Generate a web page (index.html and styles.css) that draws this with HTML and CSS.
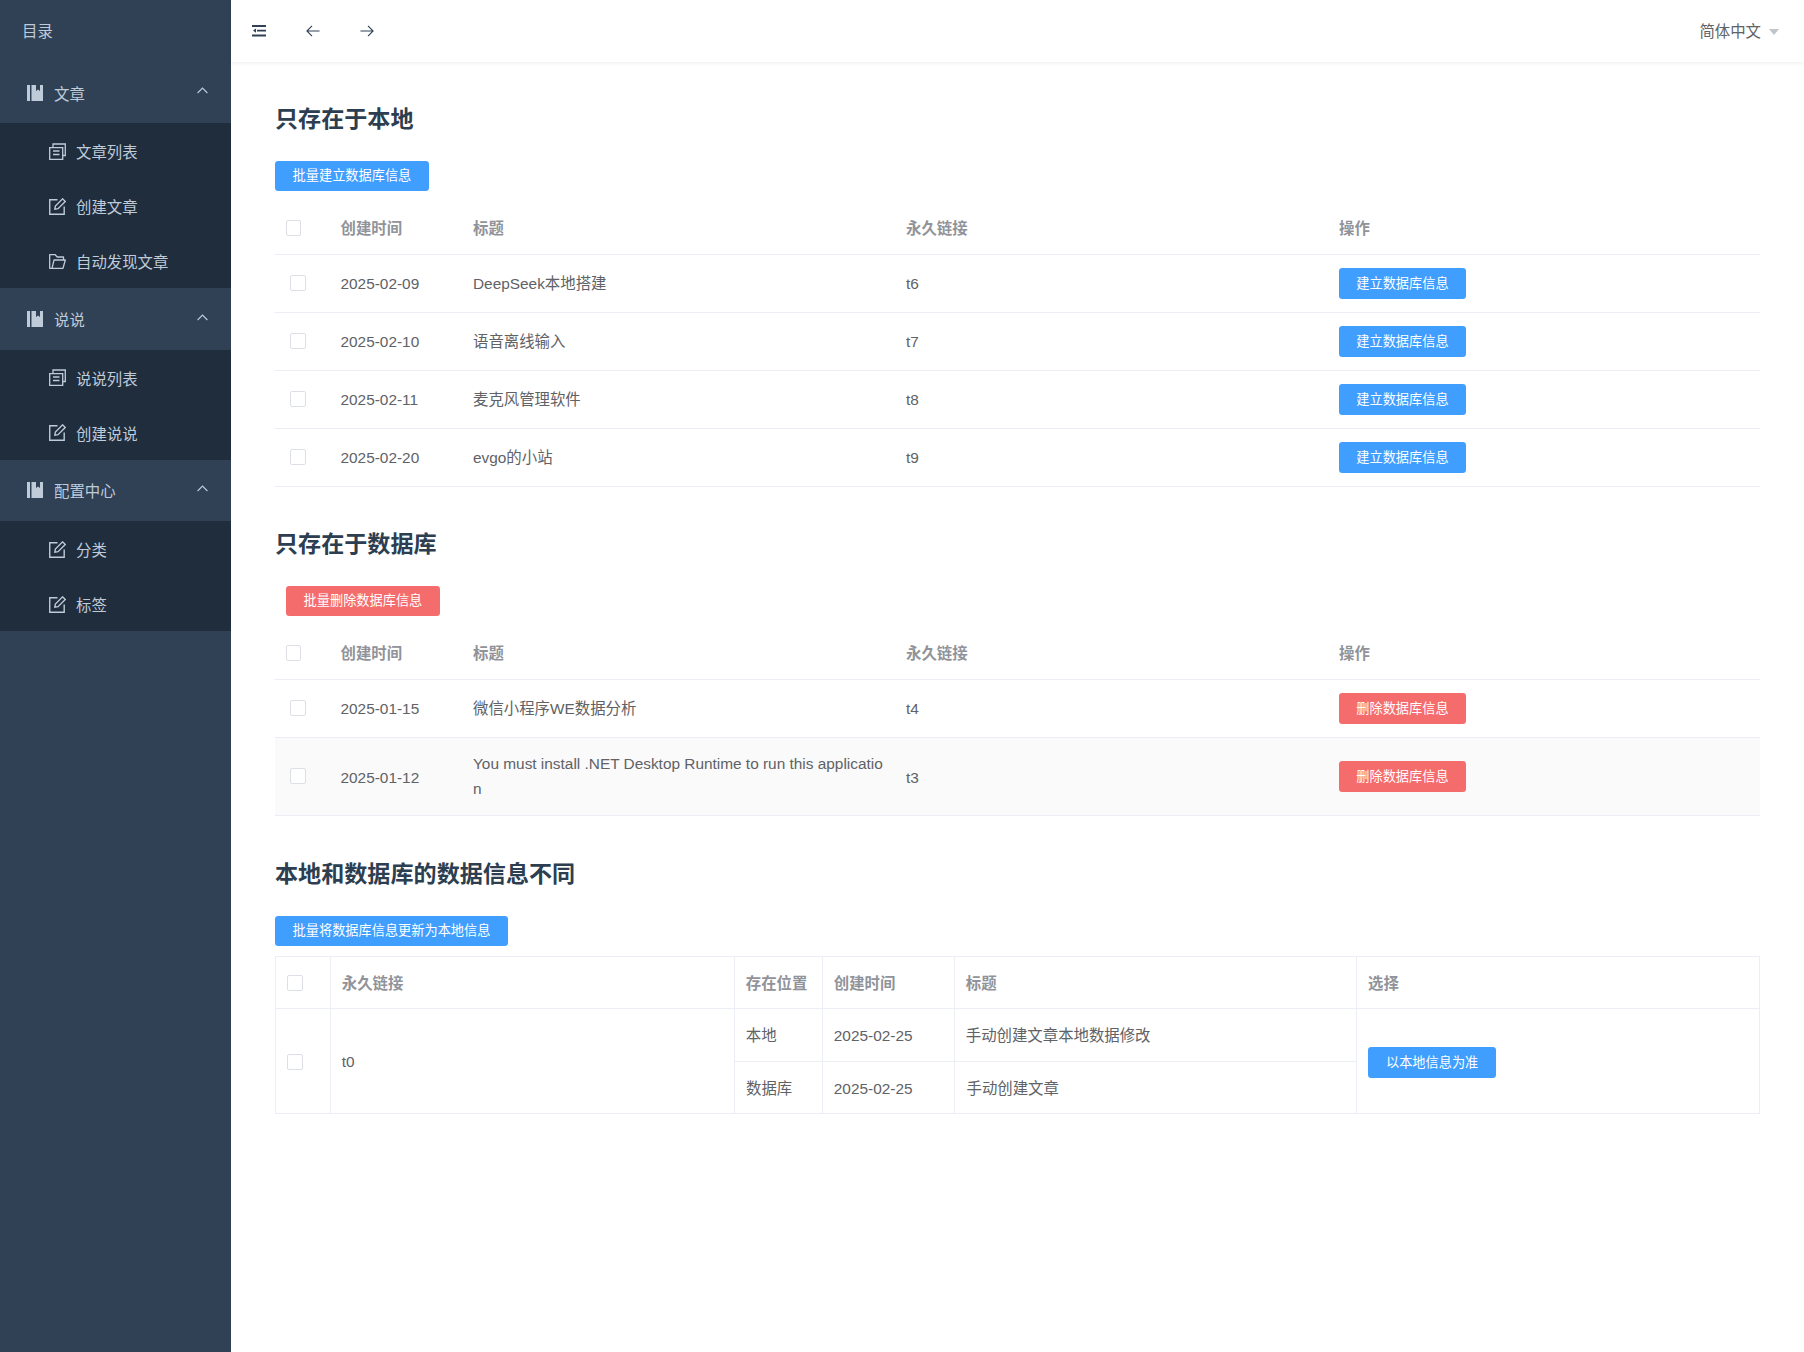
FILE: index.html
```html
<!DOCTYPE html>
<html lang="zh-CN">
  <head>
    <meta charset="UTF-8" />
    <title>文章同步</title>
    <link rel="stylesheet" href="styles.css">
  </head>
  <body>
    <svg class="icon-defs" width="0" height="0">
      <symbol id="i-book" viewBox="0 0 16 16">
        <path d="M0 0h3v16H0zM4.500 0H9v6l2-1.600L13 6V0h3v16H4.500z" fill="currentColor" />
      </symbol>
      <symbol id="i-copy" viewBox="0 0 17 17">
        <path d="M.7 4.700h13v11.600H.7zM4 4.500V1h12.300v11.500h-2M4 8h6.500M4 11.500h6.500" fill="none" stroke="currentColor" stroke-width="1.300" />
      </symbol>
      <symbol id="i-edit" viewBox="0 0 16 16">
        <path d="M8 1.700H.7v13.600h13.600V8" fill="none" stroke="currentColor" stroke-width="1.300" />
        <path d="M5.500 10.500l.5-3L12.800.8l2.500 2.500L8.500 10z" fill="none" stroke="currentColor" stroke-width="1.300" />
      </symbol>
      <symbol id="i-folder" viewBox="0 0 17 15">
        <path d="M3 14.300H.7V.7h5.500l2 2.300h6.300v3M3 14.300L5 6h11.300l-2.300 8.300z" fill="none" stroke="currentColor" stroke-width="1.300" stroke-linejoin="round" />
      </symbol>
      <symbol id="i-chevron" viewBox="0 0 11 7">
        <path d="M.6 6L5.500 1l4.900 5" fill="none" stroke="currentColor" stroke-width="1.100" />
      </symbol>
    </svg>

    <div class="layout">
      <aside class="sidebar">
        <div class="side-title">目录</div>

        <div class="menu-head">
          <svg class="menu-icon"><use href="#i-book" /></svg>
          <span>文章</span>
          <svg class="chevron"><use href="#i-chevron" /></svg>
        </div>
        <div class="submenu">
          <div class="sub-item"><svg class="sub-icon"><use href="#i-copy" /></svg><span>文章列表</span></div>
          <div class="sub-item"><svg class="sub-icon"><use href="#i-edit" /></svg><span>创建文章</span></div>
          <div class="sub-item"><svg class="sub-icon"><use href="#i-folder" /></svg><span>自动发现文章</span></div>
        </div>

        <div class="menu-head">
          <svg class="menu-icon"><use href="#i-book" /></svg>
          <span>说说</span>
          <svg class="chevron"><use href="#i-chevron" /></svg>
        </div>
        <div class="submenu">
          <div class="sub-item"><svg class="sub-icon"><use href="#i-copy" /></svg><span>说说列表</span></div>
          <div class="sub-item"><svg class="sub-icon"><use href="#i-edit" /></svg><span>创建说说</span></div>
        </div>

        <div class="menu-head">
          <svg class="menu-icon"><use href="#i-book" /></svg>
          <span>配置中心</span>
          <svg class="chevron"><use href="#i-chevron" /></svg>
        </div>
        <div class="submenu">
          <div class="sub-item"><svg class="sub-icon"><use href="#i-edit" /></svg><span>分类</span></div>
          <div class="sub-item"><svg class="sub-icon"><use href="#i-edit" /></svg><span>标签</span></div>
        </div>
      </aside>

      <div class="content">
        <header class="topbar">
          <svg class="bar-icon fold" viewBox="0 0 14 12">
            <path d="M0 0h14v2H0zM5 4.800h9v1.600H5zM0 9.500h14v2H0z" fill="currentColor" />
            <path d="M4 3.500L1 5.600l3 2.100z" fill="currentColor" />
          </svg>
          <svg class="bar-icon arrow" viewBox="0 0 14 12">
            <path d="M13.500 6H1M6 .8L.9 6 6 11.200" fill="none" stroke="currentColor" stroke-width="1.100" />
          </svg>
          <svg class="bar-icon arrow" viewBox="0 0 14 12">
            <path d="M.5 6H13M8 .8L13.100 6 8 11.200" fill="none" stroke="currentColor" stroke-width="1.100" />
          </svg>
          <div class="lang">简体中文<i class="caret"></i></div>
        </header>

        <main class="main">
          <section class="block">
            <h2>只存在于本地</h2>
            <button class="btn btn-blue">批量建立数据库信息</button>
            <table class="data-table">
              <colgroup><col class="c-check" /><col class="c-time" /><col class="c-title" /><col class="c-link" /><col /></colgroup>
              <thead>
                <tr><th><i class="check check-head"></i></th><th>创建时间</th><th>标题</th><th>永久链接</th><th>操作</th></tr>
              </thead>
              <tbody>
                <tr><td><i class="check"></i></td><td>2025-02-09</td><td>DeepSeek本地搭建</td><td>t6</td><td><button class="btn btn-blue btn-row">建立数据库信息</button></td></tr>
                <tr><td><i class="check"></i></td><td>2025-02-10</td><td>语音离线输入</td><td>t7</td><td><button class="btn btn-blue btn-row">建立数据库信息</button></td></tr>
                <tr><td><i class="check"></i></td><td>2025-02-11</td><td>麦克风管理软件</td><td>t8</td><td><button class="btn btn-blue btn-row">建立数据库信息</button></td></tr>
                <tr><td><i class="check"></i></td><td>2025-02-20</td><td>evgo的小站</td><td>t9</td><td><button class="btn btn-blue btn-row">建立数据库信息</button></td></tr>
              </tbody>
            </table>
          </section>

          <section class="block block-mid">
            <h2>只存在于数据库</h2>
            <button class="btn btn-red btn-indent">批量删除数据库信息</button>
            <table class="data-table">
              <colgroup><col class="c-check" /><col class="c-time" /><col class="c-title" /><col class="c-link" /><col /></colgroup>
              <thead>
                <tr><th><i class="check check-head"></i></th><th>创建时间</th><th>标题</th><th>永久链接</th><th>操作</th></tr>
              </thead>
              <tbody>
                <tr><td><i class="check"></i></td><td>2025-01-15</td><td>微信小程序WE数据分析</td><td>t4</td><td><button class="btn btn-red btn-row">删除数据库信息</button></td></tr>
                <tr class="is-hover"><td><i class="check"></i></td><td>2025-01-12</td><td class="break">You must install .NET Desktop Runtime to run this application</td><td>t3</td><td><button class="btn btn-red btn-row">删除数据库信息</button></td></tr>
              </tbody>
            </table>
          </section>

          <section class="block">
            <h2>本地和数据库的数据信息不同</h2>
            <button class="btn btn-blue">批量将数据库信息更新为本地信息</button>
            <table class="diff-table">
              <colgroup><col class="d-check" /><col class="d-link" /><col class="d-place" /><col class="d-time" /><col class="d-title" /><col /></colgroup>
              <thead>
                <tr><th><i class="check"></i></th><th>永久链接</th><th>存在位置</th><th>创建时间</th><th>标题</th><th>选择</th></tr>
              </thead>
              <tbody>
                <tr class="row-first">
                  <td rowspan="2"><i class="check"></i></td>
                  <td rowspan="2">t0</td>
                  <td>本地</td><td>2025-02-25</td><td>手动创建文章本地数据修改</td>
                  <td rowspan="2"><button class="btn btn-blue btn-pick">以本地信息为准</button></td>
                </tr>
                <tr><td>数据库</td><td>2025-02-25</td><td>手动创建文章</td></tr>
              </tbody>
            </table>
          </section>
        </main>
      </div>
    </div>
  </body>
</html>
```

FILE: styles.css
```css
html,
body {
  margin: 0;
  padding: 0;
  height: 100%;
}
body {
  font-family: "Liberation Sans", "Noto Sans CJK SC", sans-serif;
  font-size: 15.4px;
  color: #606266;
  background: #fff;
}
.icon-defs {
  position: absolute;
}
.layout {
  display: flex;
  min-height: 1352px;
}

/* sidebar */
.sidebar {
  width: 231px;
  flex: none;
  background: #304156;
  color: #bfcbd9;
}
.side-title {
  height: 62px;
  line-height: 64px;
  padding-left: 22px;
}
.menu-head {
  display: flex;
  align-items: center;
  height: 61.4px;
  padding: 0 23px 0 27px;
}
.menu-icon {
  width: 16px;
  height: 16px;
  margin-right: 11px;
}
.chevron {
  width: 11px;
  height: 7px;
  margin-left: auto;
  margin-top: -4px;
}
.submenu {
  background: #1f2d3d;
}
.sub-item {
  display: flex;
  align-items: center;
  box-sizing: border-box;
  height: 55px;
  padding: 1px 0 0 49px;
}
.sub-icon {
  width: 17px;
  height: 17px;
  margin-right: 10px;
}

/* top bar */
.content {
  flex: 1;
  min-width: 0;
}
.topbar {
  display: flex;
  align-items: center;
  height: 62px;
  padding: 0 25px 0 21px;
  box-shadow: 0 1px 4px rgba(0, 21, 41, 0.08);
  color: #304156;
}
.bar-icon {
  width: 14px;
  height: 12px;
  margin-top: -1px;
}
.fold {
  margin-right: 40px;
}
.arrow {
  margin-right: 40px;
}
.lang {
  display: flex;
  align-items: center;
  margin-left: auto;
  margin-top: -2px;
  color: #606266;
}
.caret {
  width: 0;
  height: 0;
  margin-left: 8px;
  margin-top: 3px;
  border: 5px solid transparent;
  border-top: 6px solid #c0c4cc;
  border-bottom: 0;
}

/* main */
.main {
  padding: 42px 44px 0;
}
.block {
  margin-bottom: 42px;
}
.block-mid {
  margin-bottom: 42.500px;
}
h2 {
  margin: 0 0 27px;
  font-size: 23.1px;
  line-height: 30px;
  font-weight: 700;
  color: #2c3e50;
}
.block-mid h2 {
  margin-bottom: 27.500px;
}
.btn {
  display: block;
  height: 30px;
  padding: 0 17.600px 3px;
  border: 0;
  border-radius: 3.300px;
  font-family: inherit;
  font-size: 13.2px;
  color: #fff;
  cursor: pointer;
}
.btn-blue {
  background: #409eff;
}
.btn-red {
  background: #f56c6c;
}
.btn-indent {
  margin-left: 11px;
}
.btn-row {
  height: 31px;
  padding: 0 17.300px 2px;
  margin-top: -2px;
}
.btn-pick {
  height: 31px;
  padding: 0 18px 2px;
}

.check {
  display: block;
  box-sizing: border-box;
  width: 16px;
  height: 16px;
  border: 1px solid #dcdfe6;
  border-radius: 2px;
  background: #fff;
}
.data-table .check {
  margin-top: -2px;
}
.data-table .check-head {
  width: 15px;
  margin-top: -1px;
}

/* the two plain tables */
.data-table,
.diff-table {
  width: 100%;
  table-layout: fixed;
  border-collapse: collapse;
  line-height: 25.300px;
}
.data-table {
  margin-top: 10px;
}
.data-table thead tr {
  height: 53px;
}
.data-table tbody tr {
  height: 58px;
}
.c-check {
  width: 55.500px;
}
.c-time {
  width: 132.500px;
}
.c-title,
.c-link {
  width: 433px;
}
.data-table th,
.data-table td {
  padding: 2px 10px 0;
  text-align: left;
  border-bottom: 1px solid #ebeef5;
}
.data-table th {
  font-weight: 700;
  color: #909399;
}
.data-table th:first-child {
  padding-left: 11px;
}
.data-table td:first-child {
  padding-left: 15px;
}
.data-table td.break {
  padding-top: 13px;
  padding-bottom: 14px;
  word-break: break-all;
}
.is-hover {
  background: #fafafa;
}

.diff-table {
  margin-top: 10.500px;
}
.diff-table tr {
  height: 52px;
}
.diff-table .row-first {
  height: 53px;
}
.d-check {
  width: 55px;
}
.d-link {
  width: 404px;
}
.d-place {
  width: 88px;
}
.d-time {
  width: 132px;
}
.d-title {
  width: 401.500px;
}
.diff-table th,
.diff-table td {
  padding: 2px 10.800px 0;
  text-align: left;
  border: 1px solid #ebeef5;
}
.diff-table th {
  padding-top: 3px;
  font-weight: 700;
  color: #909399;
}
.diff-table td[rowspan] {
  padding-top: 2px;
}
.diff-table th:last-child,
.diff-table td:last-child {
  padding-left: 11.500px;
}
.diff-table th:first-child,
.diff-table td:first-child {
  padding-left: 11px;
}
.diff-table th .check {
  margin-top: -3px;
}
```
